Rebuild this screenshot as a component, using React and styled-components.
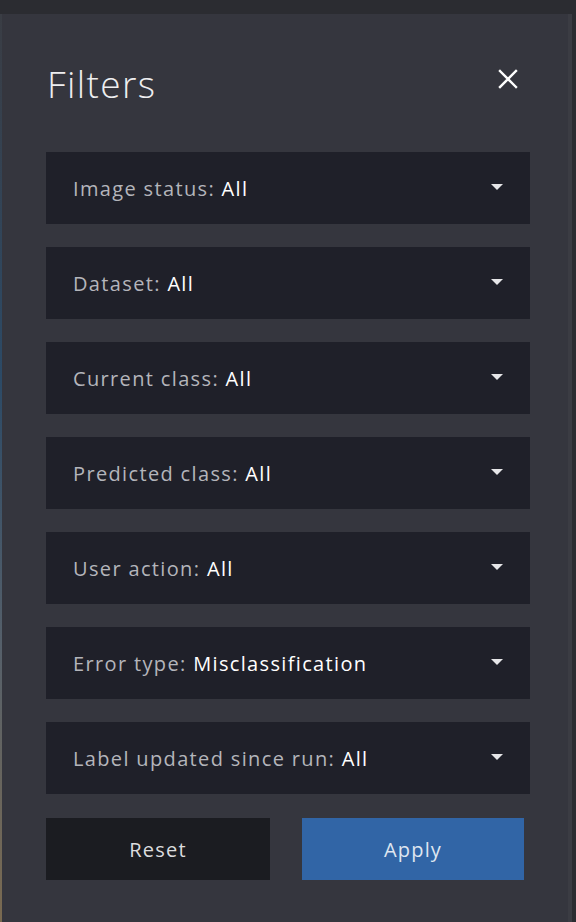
import styled, { createGlobalStyle } from 'styled-components';

const GlobalStyle = createGlobalStyle`
    html, body {
        margin: 0;
        padding: 0;
        background: #2a2b30;
    }
    body {
        font-family: "Open Sans", "Noto Sans", sans-serif;
    }
`;

const Page = styled.div`
    width: 576px;
    height: 922px;
    padding-top: 14px;
    box-sizing: border-box;
    display: flex;
    background: #2b2c31;
`;

const Edge = styled.div`
    width: 2px;
    background: linear-gradient(#3a3d44, #2c4a66 40%, #56606a 70%, #7a6a50);
`;

const Panel = styled.div`
    width: 570px;
    background: #35363e;
    border-right: 4px solid #3b3c43;
    padding: 0 0 0 44px;
    box-sizing: border-box;
    display: flex;
    flex-direction: column;
`;

const Header = styled.header`
    display: flex;
    align-items: center;
    justify-content: space-between;
    height: 138px;
    padding: 0 12px 0 1px;
    width: 484px;
    box-sizing: border-box;
`;

const Title = styled.h1`
    margin: 0;
    font-size: 37px;
    font-weight: 300;
    color: #eeeef0;
    letter-spacing: 1.4px;
`;

const Close = styled.button`
    border: none;
    background: none;
    padding: 0;
    margin-top: -8px;
    width: 20px;
    height: 20px;
    display: flex;
    align-items: center;
    justify-content: center;
    cursor: pointer;
`;

const List = styled.div`
    display: flex;
    flex-direction: column;
    gap: 23px;
`;

const Select = styled.div`
    width: 484px;
    height: 72px;
    background: #1f2029;
    display: flex;
    align-items: center;
    justify-content: space-between;
    padding: 0 27px 0 27px;
    box-sizing: border-box;
    font-size: 20px;
    letter-spacing: 1.35px;
`;

const Label = styled.span`
    color: #b4b5bb;
`;

const Value = styled.span`
    color: #ffffff;
`;

const Caret = styled.span`
    width: 0;
    height: 0;
    border-left: 6px solid transparent;
    border-right: 6px solid transparent;
    border-top: 6px solid #e6e6e8;
    margin-top: -2px;
`;

const Buttons = styled.div`
    display: flex;
    gap: 32px;
    margin-top: 24px;
`;

const Button = styled.button`
    width: ${p => p.$w}px;
    height: 62px;
    border: none;
    background: ${p => (p.$primary ? '#3165a6' : '#1b1c21')};
    color: ${p => (p.$primary ? '#dfe6f0' : '#dcdcdf')};
    font-family: "Open Sans", "Noto Sans", sans-serif;
    font-size: 20px;
    font-weight: 400;
    letter-spacing: 1.2px;
    cursor: pointer;
`;

const filters = [
    ['Image status', 'All'],
    ['Dataset', 'All'],
    ['Current class', 'All'],
    ['Predicted class', 'All'],
    ['User action', 'All'],
    ['Error type', 'Misclassification'],
    ['Label updated since run', 'All'],
];

function App() {
    return (
        <>
            <GlobalStyle />
            <Page>
                <Edge />
                <Panel>
                    <Header>
                        <Title>Filters</Title>
                        <Close aria-label="Close">
                            <svg width="20" height="20" viewBox="0 0 20 20">
                                <path d="M2 2 L18 18 M18 2 L2 18" stroke="#ffffff" strokeWidth="2.4" strokeLinecap="square" />
                            </svg>
                        </Close>
                    </Header>
                    <List>
                        {filters.map(([label, value]) => (
                            <Select key={label}>
                                <span>
                                    <Label>{label}: </Label>
                                    <Value>{value}</Value>
                                </span>
                                <Caret />
                            </Select>
                        ))}
                    </List>
                    <Buttons>
                        <Button $w={224}>Reset</Button>
                        <Button $w={222} $primary>Apply</Button>
                    </Buttons>
                </Panel>
            </Page>
        </>
    );
}

export default App;
